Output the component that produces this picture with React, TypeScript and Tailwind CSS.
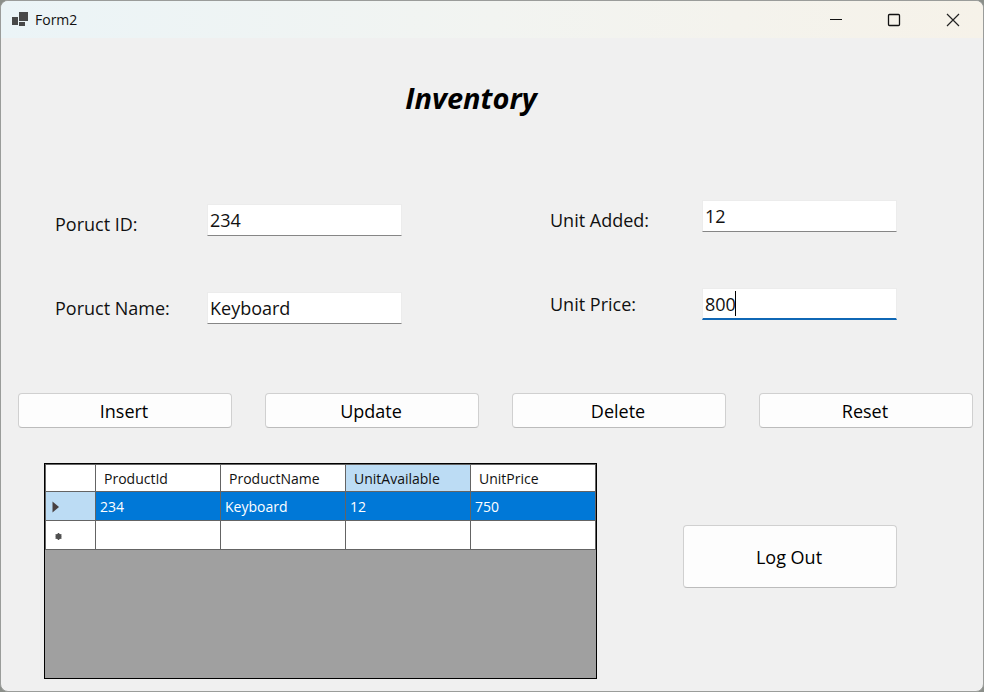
import { useState } from "react";

type Field = { id: string; label: string; initial: string; active?: boolean };

const leftFields: Field[] = [
  { id: "product-id", label: "Poruct ID:", initial: "234" },
  { id: "product-name", label: "Poruct Name:", initial: "Keyboard" },
];

const rightFields: Field[] = [
  { id: "unit-added", label: "Unit Added:", initial: "12" },
  { id: "unit-price", label: "Unit Price:", initial: "800", active: true },
];

const actions = ["Insert", "Update", "Delete", "Reset"];
const columns = ["ProductId", "ProductName", "UnitAvailable", "UnitPrice"];
const selectedRow = ["234", "Keyboard", "12", "750"];

const buttonStyle =
  "rounded-[4px] border border-[#d0d0d0] border-b-[#bcbcbc] bg-[#fdfdfd] pr-0.5 text-[18px] leading-6 text-black";

function TextField({ field }: { field: Field }) {
  const [value, setValue] = useState(field.initial);
  return (
    <div className="relative">
      <input
        id={field.id}
        type="text"
        value={value}
        onChange={(e) => setValue(e.target.value)}
        className={
          "block h-8 w-full border border-[#ececec] bg-white px-0.5 text-[18px] leading-6 text-[#111] outline-none " +
          (field.active ? "border-b-2 border-b-[#0f67b5]" : "border-b-[#868686]")
        }
      />
      {field.active && (
        <span className="pointer-events-none absolute top-[3px] left-0.5 flex h-[25px] text-[18px]" aria-hidden="true">
          <span className="invisible">{value}</span>
          <span className="w-px bg-black" />
        </span>
      )}
    </div>
  );
}

function FieldGroup({ fields }: { fields: Field[] }) {
  return (
    <div className="flex flex-1">
      <div className="flex w-[152px] flex-col gap-14 pt-1.5">
        {fields.map((f) => (
          <label key={f.id} htmlFor={f.id} className="h-7 text-[18px] leading-7 whitespace-nowrap">
            {f.label}
          </label>
        ))}
      </div>
      <div className="flex min-w-0 flex-1 flex-col gap-14">
        {fields.map((f) => (
          <TextField key={f.id} field={f} />
        ))}
      </div>
    </div>
  );
}

function TitleBar() {
  return (
    <header className="flex h-[37px] items-center bg-linear-to-r from-[#ebf4f7] via-[#f2f4f1] to-[#f6f2e9] pl-[11px]">
      <svg width="16" height="16" viewBox="0 0 16 16" fill="#484848" aria-hidden="true">
        <rect x="0" y="5" width="6" height="8" />
        <rect x="7" y="0" width="9" height="9" />
        <rect x="7" y="10" width="6" height="4" />
      </svg>
      <h1 className="ml-[7px] flex-1 text-[14px] leading-5">Form2</h1>
      <button type="button" aria-label="Minimize" className="flex h-full w-[58px] items-center justify-center">
        <svg width="14" height="14" viewBox="0 0 14 14" stroke="#111" fill="none">
          <path d="M1 6.5H13" />
        </svg>
      </button>
      <button type="button" aria-label="Maximize" className="flex h-full w-[58px] items-center justify-center">
        <svg width="14" height="14" viewBox="0 0 14 14" stroke="#111" strokeWidth="1.3" fill="none">
          <rect x="1.5" y="1.5" width="11" height="11" rx="1" />
        </svg>
      </button>
      <button type="button" aria-label="Close" className="flex h-full w-[60px] items-center justify-center">
        <svg width="14" height="14" viewBox="0 0 14 14" stroke="#222" strokeWidth="1.2" fill="none">
          <path d="M1 1L13 13M13 1L1 13" />
        </svg>
      </button>
    </header>
  );
}

function ProductGrid() {
  return (
    <div className="h-[216px] w-[553px] border border-black bg-[#a0a0a0]">
      <table className="w-full table-fixed border-separate border-spacing-0 border-t border-l border-[#646464] bg-white text-left text-[14px] leading-5">
        <colgroup>
          <col className="w-[50px]" />
          <col />
          <col />
          <col />
          <col />
        </colgroup>
        <thead>
          <tr className="h-[27px]">
            <th className="border-r border-b border-[#646464] p-0" />
            {columns.map((name) => (
              <th
                key={name}
                scope="col"
                className={
                  "border-r border-b border-[#646464] pt-0.5 pr-0 pb-0 pl-2 font-normal " +
                  (name === "UnitAvailable" ? "bg-[#bcdcf4]" : "")
                }
              >
                {name}
              </th>
            ))}
          </tr>
        </thead>
        <tbody>
          <tr className="h-[29px]">
            <th scope="row" aria-label="Current row" className="border-r border-b border-[#646464] bg-[#bcdcf4] pt-0.5 pr-0 pb-0 pl-1.5">
              <svg width="8" height="12" viewBox="0 0 8 12" fill="#484040" aria-hidden="true">
                <path d="M0.5 0.5L7 6L0.5 11.5Z" />
              </svg>
            </th>
            {selectedRow.map((value, i) => (
              <td key={i} className="border-r border-b border-[#646464] bg-[#0078d7] pt-0.5 pr-0 pb-0 pl-1 text-white">
                {value}
              </td>
            ))}
          </tr>
          <tr className="h-[29px]">
            <th scope="row" aria-label="New row" className="border-r border-b border-[#646464] pt-0.5 pr-0 pb-0 pl-2">
              <svg width="9" height="9" viewBox="0 0 9 9" aria-hidden="true">
                <circle cx="4.5" cy="4.5" r="3" fill="#505050" />
                <path d="M4.5 1V8M1.5 2.7L7.5 6.3M7.5 2.7L1.5 6.3" stroke="#505050" />
              </svg>
            </th>
            {columns.map((name) => (
              <td key={name} className="border-r border-b border-[#646464] p-0" />
            ))}
          </tr>
        </tbody>
      </table>
    </div>
  );
}

export default function App() {
  return (
    <div className="min-h-screen bg-[#8b8f8a] font-['Open_Sans','Noto_Sans',sans-serif] text-[#111]">
      <div className="min-h-screen overflow-hidden rounded-lg border border-[#9a9c9a] bg-[#f0f0f0]">
        <TitleBar />
        <main>
          <h2 className="mt-10 pr-[42px] text-center text-[29px] leading-10 font-bold text-black italic">Inventory</h2>
          <form onSubmit={(e) => e.preventDefault()}>
            <div className="mt-[82px] flex gap-[148px] pr-[86px] pl-[54px]">
              <div className="flex flex-1 pt-1">
                <FieldGroup fields={leftFields} />
              </div>
              <div className="flex flex-1">
                <FieldGroup fields={rightFields} />
              </div>
            </div>
            <div className="mt-[69px] grid grid-cols-4 gap-[33px] pr-2.5 pl-[17px]">
              {actions.map((name) => (
                <button key={name} type="button" className={"h-[35px] " + buttonStyle}>
                  {name}
                </button>
              ))}
            </div>
          </form>
          <div className="mt-[35px] flex items-start justify-between pr-[86px] pl-[43px]">
            <ProductGrid />
            <button type="button" className={"mt-[62px] h-[63px] w-[214px] " + buttonStyle}>
              Log Out
            </button>
          </div>
        </main>
      </div>
    </div>
  );
}
